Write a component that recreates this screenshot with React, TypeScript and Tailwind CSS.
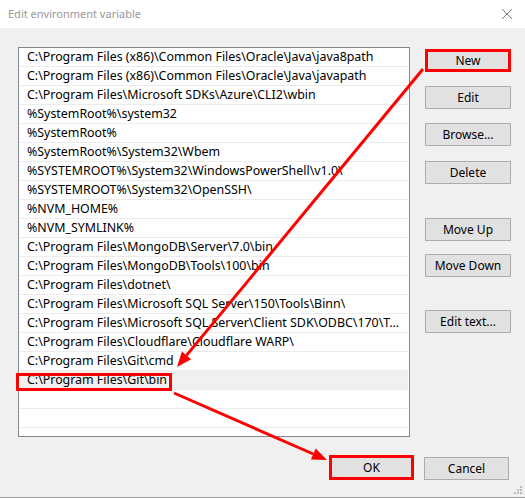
import React from "react";

const paths = [
  "C:\\Program Files (x86)\\Common Files\\Oracle\\Java\\java8path",
  "C:\\Program Files (x86)\\Common Files\\Oracle\\Java\\javapath",
  "C:\\Program Files\\Microsoft SDKs\\Azure\\CLI2\\wbin",
  "%SystemRoot%\\system32",
  "%SystemRoot%",
  "%SystemRoot%\\System32\\Wbem",
  "%SYSTEMROOT%\\System32\\WindowsPowerShell\\v1.0\\",
  "%SYSTEMROOT%\\System32\\OpenSSH\\",
  "%NVM_HOME%",
  "%NVM_SYMLINK%",
  "C:\\Program Files\\MongoDB\\Server\\7.0\\bin",
  "C:\\Program Files\\MongoDB\\Tools\\100\\bin",
  "C:\\Program Files\\dotnet\\",
  "C:\\Program Files\\Microsoft SQL Server\\150\\Tools\\Binn\\",
  "C:\\Program Files\\Microsoft SQL Server\\Client SDK\\ODBC\\170\\Tools\\Binn\\",
  "C:\\Program Files\\Cloudflare\\Cloudflare WARP\\",
  "C:\\Program Files\\Git\\cmd",
  "C:\\Program Files\\Git\\bin",
  "",
  "",
  "",
];

const SELECTED = 17;

function Button({
  label,
  className = "",
  marked = false,
}: {
  label: string;
  className?: string;
  marked?: boolean;
}) {
  return (
    <button
      className={`flex h-[23px] w-[86px] items-center justify-center bg-[#e1e1e1] text-[12px] text-black ${
        marked ? "border-[3px] border-[#ff0000]" : "border border-[#adadad]"
      } ${className}`}
    >
      {label}
    </button>
  );
}

export default function App() {
  return (
    <div className="relative flex h-[498px] w-[525px] flex-col border-b border-[#a0a0a0] bg-[#f0f0f0] font-['Noto_Sans',sans-serif] text-[12px]">
      {/* title bar */}
      <header className="flex h-[28px] items-center justify-between bg-white pl-2 pr-[13px]">
        <span className="text-[11px] text-[#999999]">Edit environment variable</span>
        <svg width="10" height="10" viewBox="0 0 10 10">
          <path d="M0 0 L10 10 M10 0 L0 10" stroke="#7a7a7a" strokeWidth="1" />
        </svg>
      </header>

      <div className="flex pl-[18px] pt-[19px]">
        {/* path list */}
        <div className="h-[390px] w-[392px] overflow-hidden border border-[#828790] bg-white px-[1px]">
          {paths.map((p, i) => (
            <div
              key={i}
              className={`flex h-[19px] items-center border-b border-[#ececec] pl-[7px] pr-[2px] ${
                i === SELECTED ? "bg-[#f0f0f0]" : ""
              }`}
            >
              <span className="truncate text-[12.4px] leading-[18px] text-black">{p}</span>
            </div>
          ))}
        </div>

        {/* side buttons */}
        <div className="ml-[15px] flex flex-col">
          <Button label="New" marked className="mt-[2px]" />
          <Button label="Edit" className="mt-[14px]" />
          <Button label="Browse..." className="mt-[14px]" />
          <Button label="Delete" className="mt-[15px]" />
          <Button label="Move Up" className="mt-[34px]" />
          <Button label="Move Down" className="mt-[13px]" />
          <Button label="Edit text..." className="mt-[33px]" />
        </div>
      </div>

      {/* OK / Cancel */}
      <div className="mt-[18px] flex items-end justify-end gap-[10px] pr-[16px]">
        <button className="flex h-[25px] w-[85px] items-center justify-center border-[3px] border-[#ff0000] bg-[#e1e1e1] text-black">
          OK
        </button>
        <button className="flex h-[23px] w-[85px] items-center justify-center border border-[#adadad] bg-[#e1e1e1] text-black">
          Cancel
        </button>
      </div>

      {/* resize grip */}
      <svg className="absolute bottom-[3px] right-[3px]" width="8" height="8" viewBox="0 0 8 8">
        <g fill="#bcbcbc">
          <rect x="6" y="0" width="2" height="2" />
          <rect x="3" y="3" width="2" height="2" />
          <rect x="6" y="3" width="2" height="2" />
          <rect x="0" y="6" width="2" height="2" />
          <rect x="3" y="6" width="2" height="2" />
          <rect x="6" y="6" width="2" height="2" />
        </g>
      </svg>

      {/* red annotations */}
      <svg className="pointer-events-none absolute left-0 top-0" width="525" height="498">
        <rect x="17.5" y="374.5" width="153" height="15" fill="none" stroke="#ff0000" strokeWidth="3" />
        <line x1="423" y1="69" x2="186.5" y2="355.4" stroke="#ff0000" strokeWidth="3" />
        <polygon points="177,367 191.2,359.3 181.9,351.6" fill="#ff0000" />
        <line x1="174" y1="393" x2="313.3" y2="454" stroke="#ff0000" strokeWidth="3" />
        <polygon points="327,460 310.9,459.5 315.7,448.5" fill="#ff0000" />
      </svg>
    </div>
  );
}
